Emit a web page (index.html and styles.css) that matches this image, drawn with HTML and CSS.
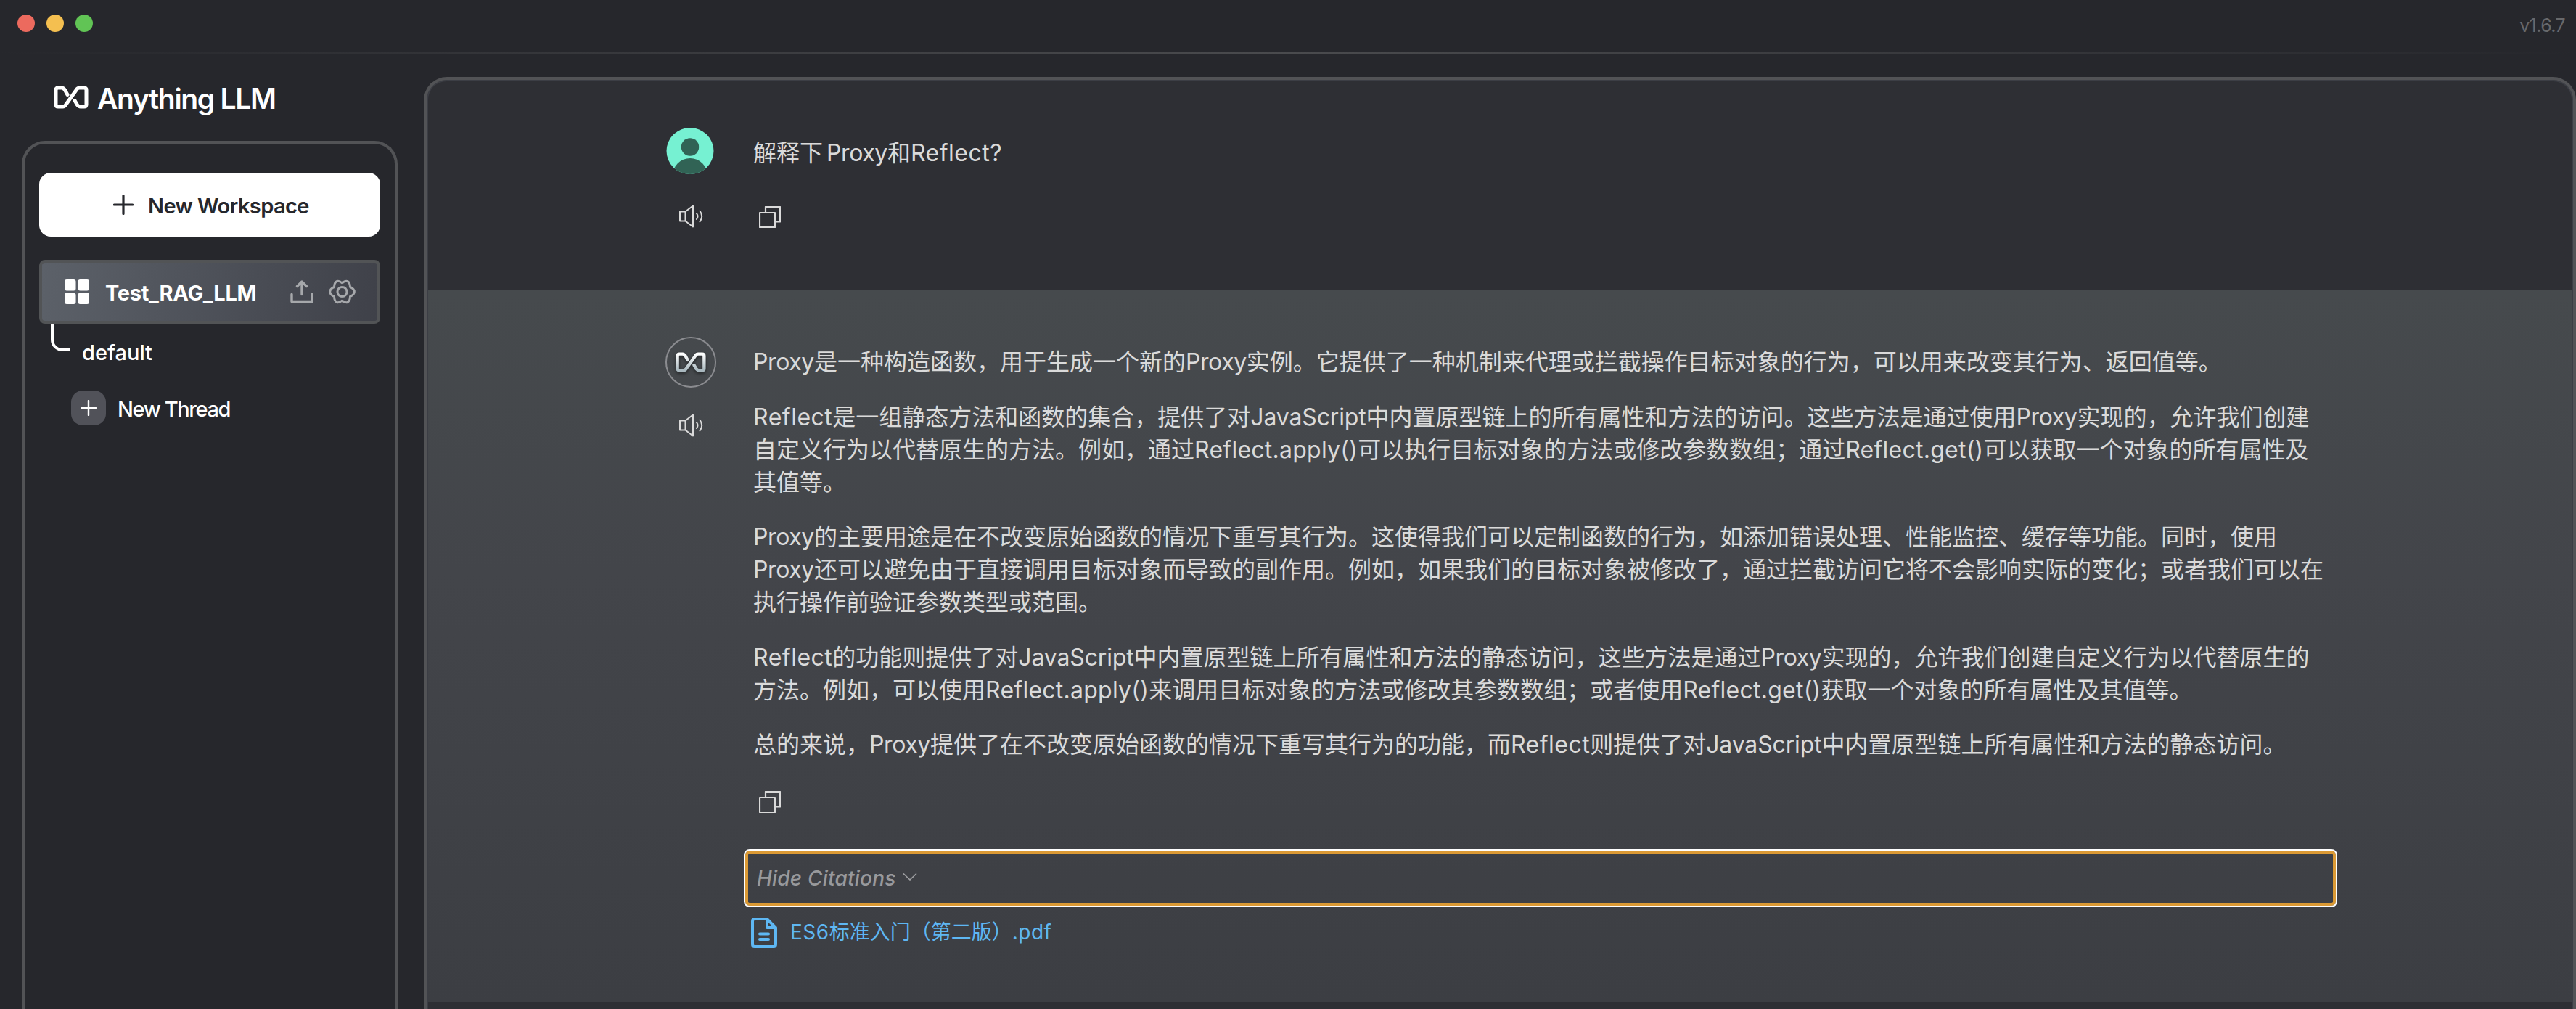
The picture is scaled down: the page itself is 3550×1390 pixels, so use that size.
FILE: index.html
```html
<!DOCTYPE html>
<html lang="zh-CN">
<head>
<meta charset="utf-8">
<title>AnythingLLM</title>
<link rel="stylesheet" href="styles.css">
</head>
<body>
<svg width="0" height="0" class="defs">
  <defs>
    <linearGradient id="silver" x1="0" y1="0" x2="0" y2="1"><stop offset="0" stop-color="#fff"/><stop offset="1" stop-color="#a9b8bf"/></linearGradient>
    <symbol id="logo" viewBox="0 0 48 32"><path d="M19 12.500 15.500 6Q13.500 3 11 3H6Q3 3 3 6V26Q3 29 6 29H12.500Q15 29 16.500 26.500L31.500 5.500Q33 3 35.500 3H42Q45 3 45 6V26Q45 29 42 29H37Q34.500 29 32.500 26.500L29 20.500" fill="none" stroke="currentColor" stroke-width="5" stroke-linecap="round" stroke-linejoin="round"/></symbol>
    <symbol id="speaker" viewBox="0 0 34 32"><path d="M2 9.500H9.500L20 1.500V30.500L9.500 22.500H2ZM9.500 9.500V22.500M25 12Q28 16 25 20M29.500 8.500Q35 16 29.500 23.500" fill="none" stroke="currentColor" stroke-width="2" stroke-linejoin="round" stroke-linecap="round"/></symbol>
    <symbol id="copy" viewBox="0 0 30 30"><path d="M9 8V1H29V21.500H22M1 9H22V29H1Z" fill="none" stroke="currentColor" stroke-width="2.200" stroke-linejoin="round"/></symbol>
  </defs>
</svg>
<header class="titlebar">
  <div class="lights"><i class="red"></i><i class="yellow"></i><i class="green"></i></div>
  <span class="version">v1.6.7</span>
</header>
<div class="app">
  <aside class="side">
    <div class="brand"><svg width="48" height="32"><use href="#logo"/></svg><span class="brand-name">Anything LLM</span></div>
    <nav class="panel">
      <button class="new-ws"><svg width="28" height="28" viewBox="0 0 28 28"><path d="M14 1.500V26.500M1.500 14H26.500" stroke="#26272c" stroke-width="3.200" stroke-linecap="round"/></svg><span class="t-newws">New Workspace</span></button>
      <div class="workspace">
        <svg class="grid-icon" width="34" height="34" viewBox="0 0 34 34" fill="#fff"><rect width="15.500" height="15.500" rx="3"/><rect x="18.500" width="15.500" height="15.500" rx="3"/><rect y="18.500" width="15.500" height="15.500" rx="3"/><rect x="18.500" y="18.500" width="15.500" height="15.500" rx="3"/></svg>
        <span class="t-ws">Test_RAG_LLM</span>
        <svg class="upload" width="32" height="32" viewBox="0 0 32 32" fill="none" stroke="#a6a8ab" stroke-width="3.400" stroke-linecap="round" stroke-linejoin="round"><path d="M2 19.500V29.500H30V19.500M16 19.500V2.500M9.500 8.500 16 2 22.500 8.500"/></svg>
        <svg class="gear" width="37" height="34" viewBox="0 0 37 34" fill="none" stroke="#a6a8ab" stroke-width="3"><circle cx="18.500" cy="17" r="6.500"/><path stroke-linejoin="round" d="M18.500 5Q23 1 26 2.600 29.300 4.300 29.500 10.500 35.300 13 35.300 17 35.300 21 29.500 23.500 29.300 29.700 26 31.400 23 33 18.500 29 14 33 11 31.400 7.700 29.700 7.500 23.500 1.700 21 1.700 17 1.700 13 7.500 10.500 7.700 4.300 11 2.600 14 1 18.500 5Z"/></svg>
      </div>
      <div class="thread"><i class="elbow"></i><span class="t-default">default</span></div>
      <div class="new-thread"><span class="plus"><svg width="22" height="22" viewBox="0 0 22 22"><path d="M11 1V21M1 11H21" stroke="#fff" stroke-width="2.400" stroke-linecap="round"/></svg></span><span class="t-thread">New Thread</span></div>
    </nav>
  </aside>
  <main class="chat">
    <section class="msg user">
      <div class="rail">
        <svg class="avatar" width="66" height="64" viewBox="0 0 66 64"><clipPath id="c"><ellipse cx="33" cy="32" rx="32.500" ry="32"/></clipPath><g clip-path="url(#c)"><rect width="66" height="64" fill="#76f1d2"/><circle cx="33" cy="26.500" r="12.200" fill="#316355"/><circle cx="33" cy="66" r="24" fill="#316355"/></g></svg>
        <svg class="speak" width="34" height="32"><use href="#speaker"/></svg>
      </div>
      <div class="body">
        <p>解释下<b class="sp"> </b><b class="px">Proxy</b>和<b class="rf">Reflect?</b></p>
        <svg class="copy" width="30" height="30"><use href="#copy"/></svg>
      </div>
    </section>
    <section class="msg bot">
      <div class="rail">
        <div class="bot-avatar"><svg width="42" height="28" viewBox="0 0 48 32"><path d="M19 12.500 15.500 6Q13.500 3 11 3H6Q3 3 3 6V26Q3 29 6 29H12.500Q15 29 16.500 26.500L31.500 5.500Q33 3 35.500 3H42Q45 3 45 6V26Q45 29 42 29H37Q34.500 29 32.500 26.500L29 20.500" fill="none" stroke="url(#silver)" stroke-width="5" stroke-linecap="round" stroke-linejoin="round"/></svg></div>
        <svg class="speak" width="34" height="32"><use href="#speaker"/></svg>
      </div>
      <div class="body">
        <p><b class="px">Proxy</b>是一种构造函数，用于生成一个新的<b class="px">Proxy</b>实例。它提供了一种机制来代理或拦截操作目标对象的行为，可以用来改变其行为、返回值等。</p>
        <p><b class="rf">Reflect</b>是一组静态方法和函数的集合，提供了对<b class="js">JavaScript</b>中内置原型链上的所有属性和方法的访问。这些方法是通过使用<b class="px">Proxy</b>实现的，允许我们创建<br>自定义行为以代替原生的方法。例如，通过<b class="call">Reflect.apply()</b>可以执行目标对象的方法或修改参数数组；通过<b class="call">Reflect.get()</b>可以获取一个对象的所有属性及<br>其值等。</p>
        <p><b class="px">Proxy</b>的主要用途是在不改变原始函数的情况下重写其行为。这使得我们可以定制函数的行为，如添加错误处理、性能监控、缓存等功能。同时，使用<br><b class="px">Proxy</b>还可以避免由于直接调用目标对象而导致的副作用。例如，如果我们的目标对象被修改了，通过拦截访问它将不会影响实际的变化；或者我们可以在<br>执行操作前验证参数类型或范围。</p>
        <p><b class="rf">Reflect</b>的功能则提供了对<b class="js">JavaScript</b>中内置原型链上所有属性和方法的静态访问，这些方法是通过<b class="px">Proxy</b>实现的，允许我们创建自定义行为以代替原生的<br>方法。例如，可以使用<b class="call">Reflect.apply()</b>来调用目标对象的方法或修改其参数数组；或者使用<b class="call">Reflect.get()</b>获取一个对象的所有属性及其值等。</p>
        <p>总的来说，<b class="px">Proxy</b>提供了在不改变原始函数的情况下重写其行为的功能，而<b class="rf">Reflect</b>则提供了对<b class="js">JavaScript</b>中内置原型链上所有属性和方法的静态访问。</p>
        <svg class="copy" width="30" height="30"><use href="#copy"/></svg>
        <button class="cite"><span class="t-cite">Hide Citations</span><svg width="20" height="10" viewBox="0 0 20 10"><path d="M1 .5 10 9 19 .5" fill="none" stroke="#a0a1a4" stroke-width="1.600"/></svg></button>
        <div class="source"><svg width="36" height="42" viewBox="0 0 36 42" fill="none" stroke="#5eb7f3" stroke-width="4" stroke-linejoin="round" stroke-linecap="round"><path d="M5 2H22L34 14V37Q34 40 31 40H5Q2 40 2 37V5Q2 2 5 2Z"/><path d="M22 3V14H33"/><path d="M12 22.500H24M12 30H24"/></svg><span><b class="t-es">ES6</b>标准入门（第二版）<b class="t-pdf">.pdf</b></span></div>
      </div>
    </section>
  </main>
</div>
</body>
</html>
```
FILE: styles.css
```css
* { box-sizing: border-box; }
body { margin: 0; width: 3550px; height: 1390px; overflow: hidden; background: #26272c; color: #fff; font-family: Inter, "Noto Sans CJK SC", sans-serif; }
svg { display: block; flex: none; }
b { font-weight: inherit; }
button { font: inherit; border: 0; text-align: left; }
span, p { white-space: nowrap; }
.defs { position: absolute; }
.titlebar { height: 74px; display: flex; justify-content: space-between; padding: 20px 15px 0 24px; border-bottom: 2px solid; border-image: linear-gradient(90deg, #26272c, #4a4b4e 50%, #26272c) 2; }
.lights { display: flex; gap: 16px; }
.lights i { width: 24px; height: 24px; border-radius: 50%; }
.red { background: #ec6a5e; }
.yellow { background: #f4bf50; }
.green { background: #61c455; }
.version { font-size: 25px; line-height: 30px; color: #67686b; letter-spacing: -.6px; }
.app { display: flex; gap: 36px; height: 1316px; padding-left: 30px; }
.side { width: 518px; }
.brand { height: 120px; padding: 44px 0 0 44px; display: flex; gap: 12px; }
.brand-name { font-size: 39px; line-height: 36px; font-weight: 600; letter-spacing: -1.3px; }
.panel { height: 1196px; border: 4px solid #525356; border-bottom: 0; border-radius: 32px 32px 0 0; padding: 40px 20px 0; }
.new-ws { width: 470px; height: 88px; border-radius: 16px; background: #fff; color: #26272c; display: flex; align-items: center; gap: 20px; padding: 0 0 0 102px; font-size: 29px; font-weight: 600; }
.t-newws { letter-spacing: -.6px; padding-top: 2px; }
.workspace { margin-top: 32px; width: 470px; height: 88px; border: 4px solid #525456; border-radius: 8px; background: linear-gradient(100deg, #5c6169, #3f4149); display: flex; align-items: center; padding: 0 30px 0 31px; font-size: 29px; font-weight: 700; }
.t-ws { margin-left: 22px; width: 232px; padding-top: 2px; letter-spacing: -.3px; }
.upload { margin-right: 21px; margin-left: 23px; }
.thread { display: flex; gap: 17px; padding-left: 16px; font-size: 29px; font-weight: 500; height: 92px; }
.elbow { width: 26px; height: 38px; border: solid #fff; border-width: 0 0 4px 4px; border-bottom-left-radius: 16px; }
.t-default { line-height: 36px; margin-top: 22px; }
.new-thread { display: flex; align-items: center; gap: 16px; padding-left: 44px; font-size: 29px; font-weight: 500; }
.t-thread { letter-spacing: -1.4px; padding-top: 2px; }
.plus { width: 48px; height: 48px; border-radius: 16px; background: #515259; display: grid; place-items: center; }
.chat { margin-top: 32px; width: 2966px; height: 1284px; border: 4px solid #525356; border-bottom: 0; border-radius: 32px 32px 0 0; overflow: hidden; background: #2e2f34; box-shadow: inset 2px 0 #3c3e45, inset -2px 0 #3c3e45, inset 0 2px #3c3e45; padding: 2px 2px 0; }
.msg { display: flex; padding-left: 327px; gap: 51px; color: #dadada; }
.user { height: 288px; padding-top: 64px; }
.bot { height: 980px; padding-top: 64px; background: linear-gradient(#464a4d, #43454a 40%, #3c3e43); }
.rail { width: 70px; display: flex; flex-direction: column; }
.rail .avatar { margin-left: 1px; }
.rail .speak { margin: 42px 0 0 18px; }
.bot .rail .speak { margin-top: 36px; }
.bot-avatar { width: 70px; height: 70px; border: 2px solid #8b8c90; border-radius: 50%; display: grid; place-items: center; }
.bot-avatar svg { filter: drop-shadow(0 2px 2px #0008); }
.body { font-size: 32px; line-height: 45px; }
.body p { margin: 0 0 30.500px; }
.bot .body { padding-top: 12px; }
.user .body { padding-top: 12px; }
.user .copy { margin: 51px 0 0 8px; }
.bot .copy { margin: 42px 0 52px 8px; }
.px { letter-spacing: -.4px; }
.rf { letter-spacing: .5px; }
.call { letter-spacing: .25px; }
.js { letter-spacing: -.15px; }
.sp { letter-spacing: -4px; }
.cite { display: flex; align-items: center; gap: 10px; width: 2192px; height: 76px; margin-left: -11px; padding: 0 0 0 12px; background: none; border: 4px solid #db9a35; outline: 2px solid #fff; border-radius: 6px; color: #98999c; font-size: 28px; font-style: italic; font-weight: 500; }
.t-cite { letter-spacing: .2px; }
.cite svg { margin-bottom: 5px; }
.source { display: flex; align-items: center; gap: 18px; margin: 14px 0 0 -3px; font-size: 28px; color: #5eb7f3; }
.t-es, .t-pdf { letter-spacing: .5px; }
```
